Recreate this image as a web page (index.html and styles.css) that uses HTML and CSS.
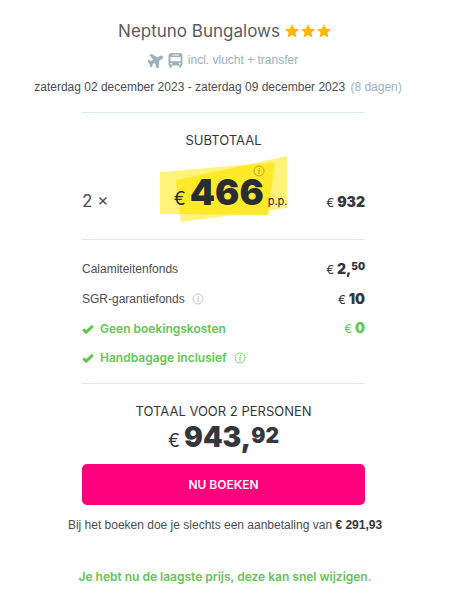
FILE: index.html
```html
<!DOCTYPE html>
<html lang="nl">
<head>
  <meta charset="UTF-8">
  <meta name="viewport" content="width=device-width, initial-scale=1">
  <title>Neptuno Bungalows</title>
  <link rel="stylesheet" href="styles.css">
</head>
<body>

<!-- Iconen -->
<svg class="sprite" aria-hidden="true">
  <symbol id="star" viewBox="0 0 24 24">
    <path d="M12 1.500l3.200 7 7.600.8-5.700 5.100 1.600 7.500L12 18.100l-6.700 3.800 1.600-7.500L1.200 9.300l7.600-.8z"/>
  </symbol>
  <symbol id="info" viewBox="0 0 12 12">
    <circle cx="6" cy="6" r="5" fill="none" stroke="currentColor" stroke-width="0.8"/>
    <circle cx="6.500" cy="3.600" r="0.700"/>
    <path d="M5.200 5.300h1.100l-.6 3h.9" fill="none" stroke="currentColor" stroke-width="0.9"/>
  </symbol>
  <symbol id="check" viewBox="0 0 12 12">
    <path d="M1.200 6.400l2.900 2.700 6.800-6.200" fill="none" stroke="currentColor" stroke-width="3"/>
  </symbol>
</svg>

<main class="booking">
  <!-- Header -->
  <header class="header">
    <h1 class="hotel">
      Neptuno Bungalows
      <span class="stars" role="img" aria-label="3 sterren">
        <svg><use href="#star"/></svg>
        <svg><use href="#star"/></svg>
        <svg><use href="#star"/></svg>
      </span>
    </h1>
    <p class="transport">
      <svg class="plane" viewBox="2 2 20 20" aria-hidden="true">
        <path transform="rotate(62 12 12)" stroke="currentColor" stroke-width="0.8" d="M22 15.500v-2.600l-8-5V3.100a2 2 0 0 0-4 0v4.800l-8 5v2.600l8-2v4.500l-2.800 1.700v2.200l4.800-1.200 4.800 1.200v-2.200L14 18v-4.500z"/>
      </svg>
      <svg class="bus" viewBox="0 0 14 14" aria-hidden="true">
        <path fill-rule="evenodd" d="M3 0h8q2.500.3 2.500 2.500v9.200h-1V13q0 1-1 1t-1-1v-1.300h-7V13q0 1-1 1t-1-1v-1.300h-1V2.500Q.5.300 3 0zM4 1.300v1h6v-1zM2.200 3.700v4h9.600v-4zM3.100 9a.9.9 0 1 0 .1 0zM10.800 9a.9.9 0 1 0 .1 0z"/>
      </svg>
      <span>incl. vlucht + transfer</span>
    </p>
    <p class="dates">zaterdag 02 december 2023 - zaterdag 09 december 2023 <span class="days">(8 dagen)</span></p>
  </header>

  <!-- Subtotaal -->
  <section class="subtotal">
    <h2 class="caption">SUBTOTAAL</h2>
    <div class="price-row">
      <span class="times">2 ×</span>
      <div class="highlight">
        <svg class="marker" viewBox="0 0 128 66" preserveAspectRatio="none" aria-hidden="true">
          <path class="marker-light" d="M0 16L115 6.500 108 59 0 58z"/>
          <path class="marker-light" d="M16 24L127 0v52L21 66z"/>
          <path class="marker-deep" d="M16 24L86 9l29-2.500L108 59l-88-1z"/>
        </svg>
        <span class="person-price"><span class="euro">€</span><strong>466</strong><small>p.p.</small></span>
        <svg class="info price-info" aria-hidden="true"><use href="#info"/></svg>
      </div>
      <span class="amount"><span class="currency">€</span> 932</span>
    </div>
  </section>

  <!-- Bijkomende kosten -->
  <ul class="costs">
    <li>
      <span>Calamiteitenfonds</span>
      <span class="amount"><span class="currency">€</span> 2,<sup>50</sup></span>
    </li>
    <li>
      <span class="label">SGR-garantiefonds <svg class="info" aria-hidden="true"><use href="#info"/></svg></span>
      <span class="amount"><span class="currency">€</span> 10</span>
    </li>
    <li class="included">
      <span class="label"><svg class="check" aria-hidden="true"><use href="#check"/></svg>Geen boekingskosten</span>
      <span class="amount"><span class="currency">€</span> 0</span>
    </li>
    <li class="included">
      <span class="label"><svg class="check" aria-hidden="true"><use href="#check"/></svg>Handbagage inclusief <svg class="info" aria-hidden="true"><use href="#info"/></svg></span>
    </li>
  </ul>

  <!-- Totaal -->
  <section class="total">
    <h2 class="caption">TOTAAL VOOR 2 PERSONEN</h2>
    <p class="total-price"><span class="euro">€</span><strong>943,<sup>92</sup></strong></p>
    <button class="book" type="button">NU BOEKEN</button>
  </section>

  <p class="deposit">Bij het boeken doe je slechts een aanbetaling van <strong>€ 291,93</strong></p>
  <p class="lowest">Je hebt nu de laagste prijs, deze kan snel wijzigen.</p>
</main>

</body>
</html>
```

FILE: styles.css
```css
* {
  box-sizing: border-box;
}
body {
  margin: 0;
  background-color: #fff;
  color: #4b4d53;
  font-family: "Liberation Sans", Arial, sans-serif;
  font-size: 12px;
  line-height: 20px;
}
h1, h2, p, ul {
  margin: 0;
  padding: 0;
  font-weight: normal;
}
svg {
  flex: none;
  fill: currentColor;
}
.sprite {
  display: none;
}
.booking {
  padding: 15px 0;
  text-align: center;
}

/* Header */
.hotel {
  display: flex;
  justify-content: center;
  align-items: center;
  gap: 4px;
  color: #5c5b60;
  font-family: Inter, sans-serif;
  font-size: 17px;
  line-height: 32px;
}
.stars {
  display: flex;
  color: #ffb800;
}
.stars svg {
  width: 16px;
  height: 16px;
}
.transport {
  display: flex;
  justify-content: center;
  align-items: center;
  gap: 5px;
  margin-right: 4px;
  color: #9ab0bd;
  line-height: 26px;
}
.transport svg {
  width: 15px;
  height: 15px;
}
.dates {
  margin-right: 14px;
  line-height: 28px;
  white-space: nowrap;
}
.days {
  margin-left: 2px;
  color: #9ab0bd;
}

/* Blokken */
.subtotal,
.costs,
.total {
  margin: 0 85px 0 82px;
  border-top: 1px solid #d8e8ef;
}
.subtotal {
  margin-top: 11px;
  padding-top: 17px;
}
.caption {
  color: #34373d;
  font-family: Inter, sans-serif;
  font-size: 13px;
}
.price-row {
  display: grid;
  grid-template-columns: 1fr 128px 1fr;
  align-items: center;
  height: 89px;
}
.times {
  padding-top: 12px;
  font-family: Inter, sans-serif;
  font-size: 17px;
  text-align: left;
}
.highlight {
  position: relative;
  align-self: start;
  height: 66px;
  margin-top: 6px;
  color: #292c30;
}
.marker {
  position: absolute;
  inset: 0;
  width: 100%;
  height: 100%;
}
.marker-light {
  fill: #fff37a;
}
.marker-deep {
  fill: #ffea29;
}
.person-price {
  position: absolute;
  right: 0;
  bottom: -1px;
  display: flex;
  align-items: baseline;
  gap: 4px;
  font-family: Inter, sans-serif;
  line-height: 44px;
}
.person-price strong {
  font-size: 36px;
  font-weight: 900;
}
.person-price small {
  font-size: 11px;
}
.euro {
  font-family: Inter, sans-serif;
  font-size: 18px;
}
.info {
  width: 12px;
  height: 12px;
  color: #a9bbc5;
}
.price-info {
  position: absolute;
  top: 9px;
  right: 23px;
  color: #a39a1c;
}
.amount {
  color: #34373d;
  font-family: Inter, sans-serif;
  font-size: 14px;
  font-weight: 900;
  text-align: right;
}
.price-row .amount {
  padding-top: 16px;
}
.currency {
  font-size: 12px;
  font-weight: 400;
}
sup {
  font-size: 10px;
  line-height: 0;
  vertical-align: 4px;
}

/* Kosten */
.costs {
  padding: 14px 0 11px;
  list-style: none;
}
.costs li {
  display: flex;
  justify-content: space-between;
  align-items: center;
  height: 30px;
}
.costs .included {
  height: 29px;
  color: #62c654;
  font-family: Inter, sans-serif;
  font-weight: 600;
}
.included .amount,
.included .info {
  color: inherit;
}
.label {
  display: flex;
  align-items: center;
}
.label .info {
  margin-left: 7px;
}
.check {
  width: 12px;
  height: 12px;
  margin-right: 6px;
}

/* Totaal */
.total {
  padding-top: 17px;
}
.total-price {
  display: flex;
  justify-content: center;
  align-items: baseline;
  gap: 4px;
  color: #34373d;
  font-family: Inter, sans-serif;
  line-height: 32px;
}
.total-price strong {
  font-size: 28px;
  font-weight: 900;
}
.total-price sup {
  font-size: 21px;
  vertical-align: 4px;
}
.book {
  display: block;
  width: 100%;
  height: 41px;
  margin-top: 7px;
  border: 0;
  border-radius: 5px;
  background-color: #ff007d;
  color: #fff;
  font: 600 12px Inter, sans-serif;
}
.deposit {
  margin-top: 10px;
}
.deposit strong {
  color: #34373d;
}
.lowest {
  margin-top: 32px;
  color: #62c654;
  font-family: Inter, sans-serif;
  font-weight: 600;
}
```
